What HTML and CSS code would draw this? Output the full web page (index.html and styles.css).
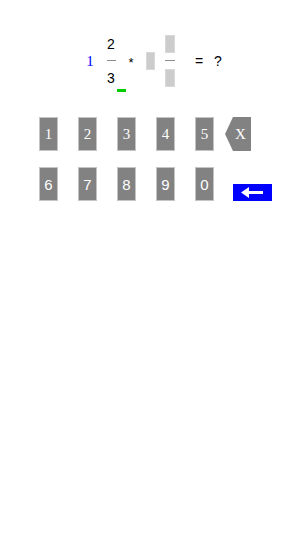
FILE: index.html
```html
<!DOCTYPE html>
<html>
<head>
<meta charset="utf-8">
<link rel="stylesheet" href="styles.css">
</head>
<body>
<div class="eq">
  <span class="whole">1</span>
  <div class="frac">
    <span class="num">2</span>
    <span class="bar"></span>
    <span class="den">3<span class="cursor"></span></span>
  </div>
  <span class="op">*</span>
  <span class="slot"></span>
  <div class="frac-slots">
    <span class="slot"></span>
    <span class="bar wide"></span>
    <span class="slot"></span>
  </div>
  <span class="eqsign">=</span>
  <span class="ans">?</span>
</div>
<div class="keypad">
  <div class="row">
    <div class="key serif">1</div>
    <div class="key serif">2</div>
    <div class="key serif">3</div>
    <div class="key serif">4</div>
    <div class="key serif">5</div>
    <div class="key back serif">X</div>
  </div>
  <div class="row row2">
    <div class="key">6</div>
    <div class="key">7</div>
    <div class="key">8</div>
    <div class="key">9</div>
    <div class="key">0</div>
    <div class="enter">
      <svg width="39" height="17" viewBox="0 0 39 17">
        <rect x="14" y="7" width="16" height="3" fill="#fff"/>
        <polygon points="8,8.5 16,3 16,14" fill="#fff"/>
      </svg>
    </div>
  </div>
</div>
</body>
</html>
```
FILE: styles.css
```css
body {
  margin: 0;
  background: #fff;
  font-family: "Liberation Sans", Arial, sans-serif;
}
.eq {
  display: flex;
  align-items: center;
  margin-top: 35px;
  height: 52px;
  padding-left: 84px;
  font-size: 14px;
  color: #000;
}
.whole {
  width: 12px;
  text-align: center;
  color: #0000ff;
  font-family: "Liberation Serif", "Times New Roman", serif;
  font-size: 15px;
}
.frac {
  margin-left: 10px;
  width: 10px;
  display: flex;
  flex-direction: column;
  align-items: center;
}
.num, .den {
  line-height: 16px;
  height: 16px;
}
.num { margin-bottom: 8px; }
.den { margin-top: 9px; position: relative; }
.bar {
  display: block;
  width: 9px;
  height: 1px;
  background: #8c8c8c;
}
.bar.wide { width: 10px; margin: 7px 0 8px; }
.cursor {
  position: absolute;
  left: 10px;
  top: 19px;
  width: 9px;
  height: 3px;
  background: #00cc00;
}
.op {
  margin-left: 10px;
  width: 10px;
  text-align: center;
  font-size: 13px;
  margin-top: 2px;
}
.slot {
  display: block;
  width: 9px;
  height: 18px;
  background: #cccccc;
  border: 1px solid #d9d9d9;
  box-sizing: border-box;
}
.eq > .slot { margin-left: 10px; }
.frac-slots {
  margin-left: 10px;
  display: flex;
  flex-direction: column;
}
.frac-slots .slot { width: 10px; }
.eqsign {
  margin-left: 18px;
  width: 12px;
  text-align: center;
}
.ans {
  margin-left: 7px;
  width: 12px;
  text-align: center;
  margin-top: -1px;
}
.keypad {
  margin-top: 30px;
}
.row {
  display: flex;
  padding-left: 39px;
  gap: 20px;
  height: 34px;
}
.row2 { margin-top: 16px; }
.key {
  width: 19px;
  height: 34px;
  box-sizing: border-box;
  background: #828282;
  border: 1px solid #c4c4c4;
  color: #fff;
  font-size: 15px;
  display: flex;
  align-items: center;
  justify-content: center;
}
.serif {
  font-family: "Liberation Serif", "Times New Roman", serif;
  font-size: 15px;
}
.key.back {
  width: 26px;
  margin-left: -9px;
  padding-left: 5px;
  border: none;
  clip-path: polygon(8px 0, 100% 0, 100% 100%, 8px 100%, 0 50%);
}
.enter {
  align-self: flex-end;
  margin-left: -1px;
  width: 39px;
  height: 17px;
  background: #0000ff;
  display: flex;
}
```
